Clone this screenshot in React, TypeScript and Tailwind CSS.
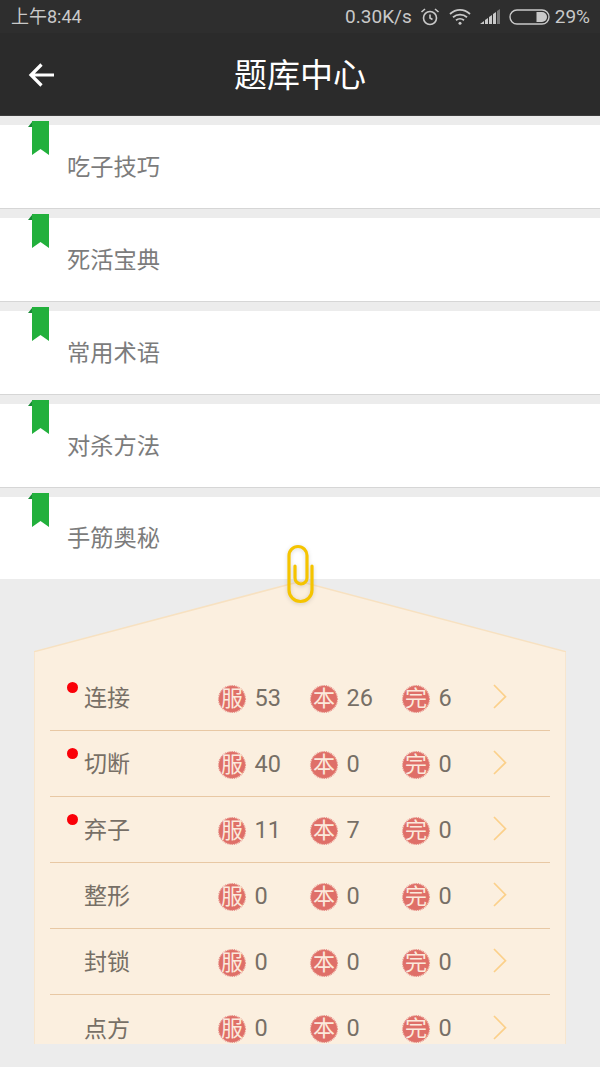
const CJK = "font-['Roboto','Noto_Sans_CJK_SC',sans-serif]";

const topics = ["吃子技巧", "死活宝典", "常用术语", "对杀方法", "手筋奥秘"];
const rows = [
  { name: "连接", dot: true, a: 53, b: 26, c: 6 },
  { name: "切断", dot: true, a: 40, b: 0, c: 0 },
  { name: "弃子", dot: true, a: 11, b: 7, c: 0 },
  { name: "整形", dot: false, a: 0, b: 0, c: 0 },
  { name: "封锁", dot: false, a: 0, b: 0, c: 0 },
  { name: "点方", dot: false, a: 0, b: 0, c: 0 },
];

function Bookmark() {
  return (
    <svg className="absolute left-[28px] top-[-4px]" width="22" height="34" viewBox="0 0 22 34">
      <path d="M0 6 L4 1 V6 Z" fill="#178a35" />
      <path d="M4 0 H21 V34 L12.5 28 L4 34 Z" fill="#22b03c" />
    </svg>
  );
}

function Stamp({ label }: { label: string }) {
  return (
    <div className="relative flex h-[30px] w-[30px] items-center justify-center">
      <svg className="absolute inset-0" width="30" height="30" viewBox="0 0 30 30">
        <circle cx="15" cy="15" r="13.2" fill="#df6f68" />
        <circle cx="15" cy="15" r="13.4" fill="none" stroke="#e58a82" strokeWidth="1.3" strokeDasharray="0.9 0.9" />
      </svg>
      <span className="relative text-[22px] leading-none text-[#fbe9dc]">{label}</span>
    </div>
  );
}

function Stat({ label, value, w }: { label: string; value: number; w: string }) {
  return (
    <div className={`flex items-center ${w}`}>
      <Stamp label={label} />
      <span className="ml-[7.5px] text-[23.5px] leading-none text-[#776f66]">{value}</span>
    </div>
  );
}

function Row({ r, last }: { r: (typeof rows)[number]; last: boolean }) {
  return (
    <div className={`relative flex h-[66px] shrink-0 items-center pt-[2px] ${last ? "" : "border-b border-[#e8c8a4]"}`}>
      {r.dot && <span className="absolute left-[17px] top-[17px] h-[11px] w-[11px] rounded-full bg-[#fa0008]" />}
      <span className="ml-[34px] w-[133px] text-[23px] leading-none text-[#776f66]">{r.name}</span>
      <Stat label="服" value={r.a} w="w-[92px]" />
      <Stat label="本" value={r.b} w="w-[92px]" />
      <Stat label="完" value={r.c} w="w-[92px]" />
      <svg className="-mt-[3px]" width="14" height="26" viewBox="0 0 14 26">
        <path d="M1 1 L12.5 12.7 L1 24" fill="none" stroke="#fbd08a" strokeWidth="1.7" />
      </svg>
    </div>
  );
}

export default function App() {
  return (
    <div className={`relative flex h-[1067px] w-[600px] flex-col overflow-hidden bg-[#ececec] ${CJK}`}>
      {/* status bar */}
      <div className="flex h-[33px] shrink-0 items-center justify-between bg-[#2e2e2e] pl-[11px] pr-[10px] leading-none text-[#c9c9c9]">
        <span className="text-[18px]">上午8:44</span>
        <div className="flex items-center text-[19px]">
          <span>0.30K/s</span>
          <svg className="ml-[8px]" width="20" height="20" viewBox="0 0 20 20" fill="none" stroke="#c9c9c9" strokeWidth="1.6">
            <circle cx="10" cy="11" r="6.5" />
            <path d="M10 7.5 V11 L12.5 12.5 M1.5 5 L5 2 M18.5 5 L15 2" />
          </svg>
          <svg className="ml-[9px]" width="22" height="18" viewBox="0 0 22 18" fill="none" stroke="#c9c9c9" strokeWidth="1.8">
            <path d="M1 6 C7 0.5 15 0.5 21 6 M4 9.3 C8 5.8 14 5.8 18 9.3 M7 12.3 C9.3 10.4 12.7 10.4 15 12.3" />
            <circle cx="11" cy="15.3" r="1.5" fill="#c9c9c9" stroke="none" />
          </svg>
          <svg className="ml-[9px]" width="21" height="15" viewBox="0 0 21 15">
            <path d="M0 15 L4 12 V15 Z M5 15 V11 L8 9 V15 Z M9 15 V8 L12 6 V15 Z" fill="#c9c9c9" />
            <path d="M13 15 V5 L16 3 V15 Z" fill="#c9c9c9" />
            <path d="M17 15 V2 L20 0 V15 Z" fill="#777" />
          </svg>
          <svg className="ml-[8px]" width="41" height="16" viewBox="0 0 41 16" fill="none">
            <rect x="1" y="1" width="39" height="14" rx="7" stroke="#c9c9c9" strokeWidth="1.4" />
            <path d="M27.5 3 H33 A5 5 0 0 1 33 13 H27.5 Z" fill="#c9c9c9" />
          </svg>
          <span className="ml-[5px]">29%</span>
        </div>
      </div>

      {/* header */}
      <div className="relative flex h-[83px] shrink-0 items-center justify-center border-b border-[#3c3c3c] bg-[#2b2b2b] pt-[3px]">
        <svg className="absolute left-[28px] top-[28px]" width="28" height="28" viewBox="0 0 28 28" fill="none" stroke="#fff" strokeWidth="3.2">
          <path d="M26 14 H3 M13.5 3.5 L3 14 L13.5 24.5" />
        </svg>
        <span className="text-[33px] leading-none text-white">题库中心</span>
      </div>

      {/* topics */}
      <div className="shrink-0">
        {topics.map((t, i) => (
          <div
            key={t}
            className={`relative mt-[9px] flex items-center bg-white ${i < 4 ? "box-content h-[83px] border-b border-[#d6d6d6]" : "h-[82px]"}`}
          >
            <Bookmark />
            <span className="ml-[67px] mt-[2px] text-[23.25px] leading-none text-[#7c7c7c]">{t}</span>
          </div>
        ))}
      </div>

      {/* card */}
      <div className="mx-[34px] mt-[2px] flex shrink-0 flex-col">
        <svg className="block" width="532" height="71" viewBox="0 0 532 71">
          <path d="M0 71 L266 0 L532 71 Z" fill="#fbefdf" />
          <path d="M0.5 71 L0.5 70.6 L266 0.5 L531.5 70.6 L531.5 71" fill="none" stroke="#f7e1c1" strokeWidth="1.5" />
        </svg>
        <div className="flex h-[392px] flex-col overflow-hidden border-x border-[#f7e6cf] bg-[#fbefdf] px-[15px] pt-[13px]">
          {rows.map((r, i) => (
            <Row key={r.name} r={r} last={i === rows.length - 1} />
          ))}
        </div>
      </div>

      {/* paper clip */}
      <svg className="absolute left-[284px] top-[542px] drop-shadow-sm" width="34" height="66" viewBox="0 0 34 66" fill="none">
        <path
          d="M11 24 V36 A6 6 0 0 0 23 36 V13.5 A9 9 0 0 0 5 13.5 V48 A11.5 11.5 0 0 0 28 48 V24"
          stroke="#f5c400"
          strokeWidth="3.2"
          strokeLinecap="round"
        />
      </svg>
    </div>
  );
}
